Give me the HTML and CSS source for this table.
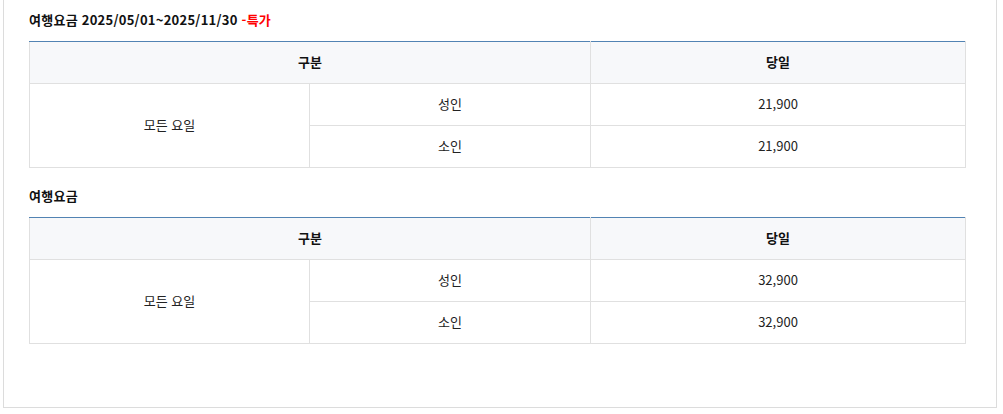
FILE: index.html
```html
<!DOCTYPE html>
<html lang="ko">
<head>
<meta charset="utf-8">
<link rel="stylesheet" href="styles.css">
</head>
<body>
<div class="box">
  <h3 class="title">여행요금 2025/05/01~2025/11/30 <span class="red">-특가</span></h3>
  <table class="fare">
    <colgroup><col class="c1"><col class="c2"><col class="c3"></colgroup>
    <thead>
      <tr><th colspan="2">구분</th><th>당일</th></tr>
    </thead>
    <tbody>
      <tr><td rowspan="2">모든 요일</td><td>성인</td><td>21,900</td></tr>
      <tr><td>소인</td><td>21,900</td></tr>
    </tbody>
  </table>
  <h3 class="title">여행요금</h3>
  <table class="fare">
    <colgroup><col class="c1"><col class="c2"><col class="c3"></colgroup>
    <thead>
      <tr><th colspan="2">구분</th><th>당일</th></tr>
    </thead>
    <tbody>
      <tr><td rowspan="2">모든 요일</td><td>성인</td><td>32,900</td></tr>
      <tr><td>소인</td><td>32,900</td></tr>
    </tbody>
  </table>
</div>
</body>
</html>
```
FILE: styles.css
```css
html, body {
  margin: 0;
  padding: 0;
  background: #fff;
}
body {
  font-family: "Noto Sans CJK KR", "Noto Sans", sans-serif;
  color: #111;
}
.box {
  margin-left: 3px;
  width: 994px;
  height: 408px;
  box-sizing: border-box;
  border: 1px solid #dcdcdc;
  border-top: none;
  padding: 9px 0 0 25px;
}
.title {
  margin: 0;
  height: 21px;
  font-size: 13px;
  font-weight: bold;
  line-height: 21px;
  letter-spacing: 0.25px;
  color: #111;
}
.red { color: #ff0000; }
.fare {
  width: 937px;
  border-collapse: collapse;
  table-layout: fixed;
  margin: 11px 0 17px;
  border-top: 1px solid #5283b3;
}
.c1 { width: 280px; }
.c2 { width: 281px; }
.fare th, .fare td {
  border: 1px solid #e0e0e0;
  text-align: center;
  font-size: 13px;
  padding: 0 0 3px;
  height: 42px;
  box-sizing: border-box;
}
.fare thead th {
  border-top: 1px solid #5283b3;
  background: #f7f8fa;
  font-weight: bold;
  color: #111;
  height: 42px;
}
.fare td {
  font-weight: normal;
  color: #222;
}
```
